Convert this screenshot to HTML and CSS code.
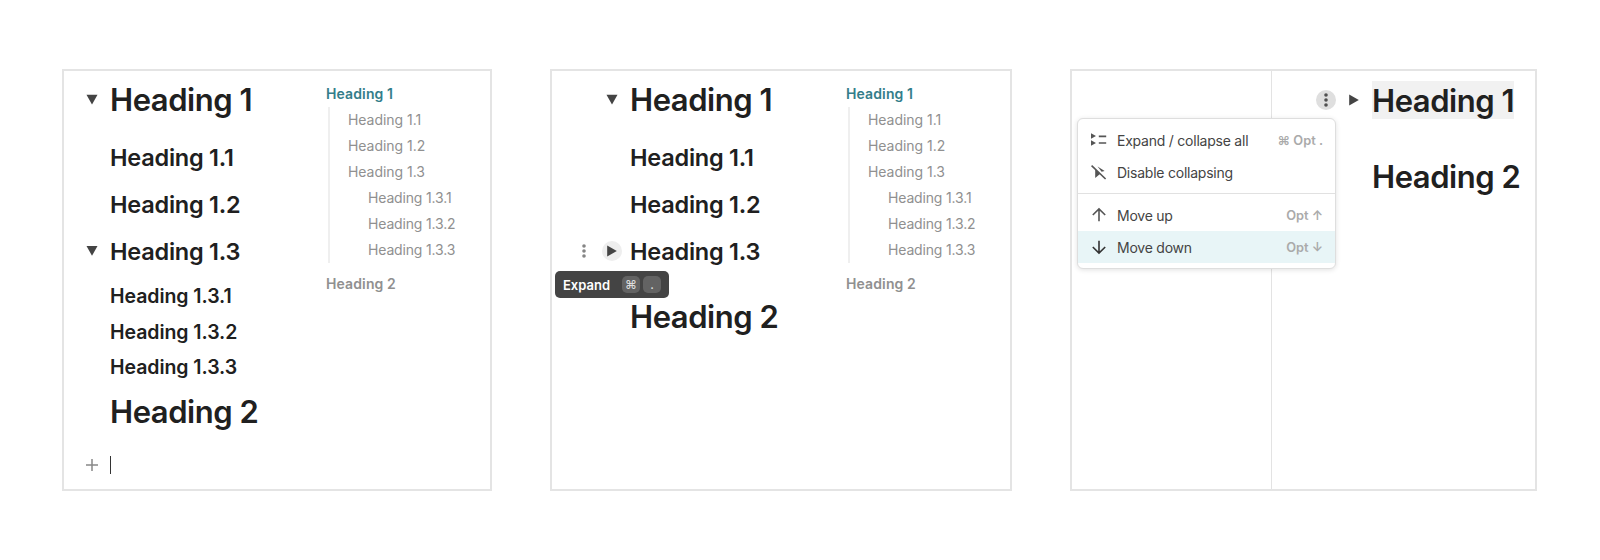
FILE: index.html
```html
<!DOCTYPE html>
<html lang="en">
<head>
<meta charset="utf-8">
<title>Collapsible headings</title>
<link rel="stylesheet" href="styles.css">
</head>
<body>
<main class="stage">
  <section class="panel panel-expanded">
    <div class="doc">
      <div class="row h1"><span class="gutter"><svg class="tri" viewBox="0 0 12 12"><path d="M.5.7h11L6 10.5z"/></svg></span><h1>Heading 1</h1></div>
      <div class="row h2 first"><span class="gutter"></span><h2>Heading 1.1</h2></div>
      <div class="row h2"><span class="gutter"></span><h2>Heading 1.2</h2></div>
      <div class="row h2"><span class="gutter"><svg class="tri" viewBox="0 0 12 12"><path d="M.5 0h11L6 9.8z"/></svg></span><h2>Heading 1.3</h2></div>
      <div class="row h3 first"><span class="gutter"></span><h3>Heading 1.3.1</h3></div>
      <div class="row h3"><span class="gutter"></span><h3>Heading 1.3.2</h3></div>
      <div class="row h3"><span class="gutter"></span><h3>Heading 1.3.3</h3></div>
      <div class="row h1 after-h3"><span class="gutter"></span><h1>Heading 2</h1></div>
      <div class="row entry"><span class="gutter"><svg class="plus" viewBox="0 0 12 12"><path d="M6 0v12M0 6h12"/></svg></span><span class="caret"></span></div>
    </div>
    <nav class="toc">
      <a class="top active">Heading 1</a>
      <div class="branch">
        <a>Heading 1.1</a><a>Heading 1.2</a><a>Heading 1.3</a>
        <a class="deep">Heading 1.3.1</a><a class="deep">Heading 1.3.2</a><a class="deep">Heading 1.3.3</a>
      </div>
      <a class="top">Heading 2</a>
    </nav>
  </section>

  <section class="panel panel-collapsed">
    <div class="doc">
      <div class="row h1"><span class="gutter"><svg class="tri" viewBox="0 0 12 12"><path d="M.5.7h11L6 10.5z"/></svg></span><h1>Heading 1</h1></div>
      <div class="row h2 first"><span class="gutter"></span><h2>Heading 1.1</h2></div>
      <div class="row h2"><span class="gutter"></span><h2>Heading 1.2</h2></div>
      <div class="row h2 target">
        <span class="gutter"><svg class="dots" viewBox="0 0 4 14"><circle cx="2" cy="2" r="1.8"/><circle cx="2" cy="7" r="1.8"/><circle cx="2" cy="12" r="1.8"/></svg><span class="round light"><svg class="tri" viewBox="0 0 12 12"><path d="M1.2.5v11L10.8 6z"/></svg></span></span>
        <h2>Heading 1.3</h2>
        <div class="tooltip">Expand<kbd class="cmd">⌘</kbd><kbd>.</kbd></div>
      </div>
      <div class="row h1 after-h2"><span class="gutter"></span><h1>Heading 2</h1></div>
    </div>
    <nav class="toc">
      <a class="top active">Heading 1</a>
      <div class="branch">
        <a>Heading 1.1</a><a>Heading 1.2</a><a>Heading 1.3</a>
        <a class="deep">Heading 1.3.1</a><a class="deep">Heading 1.3.2</a><a class="deep">Heading 1.3.3</a>
      </div>
      <a class="top">Heading 2</a>
    </nav>
  </section>

  <section class="panel panel-menu">
    <div class="side"></div>
    <div class="doc">
      <div class="row h1">
        <span class="gutter"><span class="round"><svg class="dots dark" viewBox="0 0 4 14"><circle cx="2" cy="2" r="1.8"/><circle cx="2" cy="7" r="1.8"/><circle cx="2" cy="12" r="1.8"/></svg></span><svg class="tri" viewBox="0 0 12 12"><path d="M1.2.5v11L10.8 6z"/></svg></span>
        <h1 class="selected">Heading 1</h1>
      </div>
      <div class="row h1 next"><span class="gutter"></span><h1>Heading 2</h1></div>
    </div>
    <div class="menu">
      <div class="item"><svg viewBox="0 0 18 16"><path class="fill" d="M1 1.2 6 4 1 6.8zM1 8.2 6 11 1 13.8z"/><path d="M8.8 4.4h7.4M8.8 11h7.4"/></svg><span>Expand / collapse all</span><small>⌘ Opt .</small></div>
      <div class="item"><svg viewBox="0 0 18 16"><path class="fill" d="M5.2 5.4v8.6L10 10.1zM7.6 2.6l7 4.3-3 .9z"/><path d="M1.6 1.6 15.6 15"/></svg><span>Disable collapsing</span></div>
      <hr>
      <div class="item"><svg viewBox="0 0 18 16"><path d="M9 14.3V2.2M2.8 8 9 1.9 15.2 8"/></svg><span>Move up</span><small>Opt ↑</small></div>
      <div class="item hover"><svg viewBox="0 0 18 16"><path d="M9 1.7v12.1M2.8 8 9 14.1 15.2 8"/></svg><span>Move down</span><small>Opt ↓</small></div>
    </div>
  </section>
</main>
</body>
</html>
```

FILE: styles.css
```css
* { box-sizing: border-box; }
body { margin: 0; background: #fff; color: #202020; font-family: Inter, "Liberation Sans", sans-serif; }
.stage { display: flex; gap: 58px; width: 1600px; height: 560px; padding: 69px 0 69px 62px; }
.panel { position: relative; display: flex; flex: none; height: 422px; border: 2px solid #e4e4e4; padding-top: 10px; }
.panel-expanded { width: 430px; }
.panel-collapsed { width: 462px; }
.panel-menu { width: 467px; padding-top: 0; }

.doc { flex: none; width: 262px; }
.panel-collapsed .doc { width: 294px; }
.row { position: relative; display: flex; align-items: center; }
.gutter { display: flex; flex: none; align-items: center; justify-content: flex-end; width: 46px; padding-right: 12px; }
.panel-collapsed .gutter { width: 78px; }
h1, h2, h3 { margin: 0; font-weight: 600; white-space: nowrap; }
h1 { padding-bottom: 1px; font-size: 31px; line-height: 37px; letter-spacing: -.47px; }
h2 { font-size: 23.5px; line-height: 47px; letter-spacing: -.23px; }
h3 { font-size: 19.5px; line-height: 35.5px; letter-spacing: -.06px; }
.h2.first { margin-top: 15px; }
.h3.first { margin-top: 4px; }
.after-h3 { margin-top: 7px; }
.after-h2 { margin-top: 23px; }
.entry { height: 20px; margin-top: 24px; }
.caret { width: 1px; height: 18px; background: #333; }

.tri { width: 12px; height: 12px; fill: #444; }
.plus { width: 12px; height: 12px; fill: none; stroke: #888; stroke-width: 1.5; }
.dots { width: 4px; height: 14px; fill: #858585; }
.dots.dark { fill: #505050; }
.round { display: flex; align-items: center; justify-content: center; width: 20px; height: 20px; border-radius: 50%; background: #dfdfdf; }
.round.light { background: #eee; }
.target .gutter { padding: 0 8px 1px 0; gap: 16px; }

.toc { display: flex; flex-direction: column; font-size: 14px; line-height: 26px; color: #909090; white-space: nowrap; }
.top { font-weight: 600; letter-spacing: .12px; }
.active { color: #337d8a; }
.branch { display: flex; flex-direction: column; margin: 0 0 8px 2px; padding-left: 18px; border-left: 2px solid #efefef; letter-spacing: -.04px; }
.deep { padding-left: 20px; letter-spacing: -.16px; }

.tooltip { position: absolute; left: 3px; top: 43px; display: flex; align-items: center; width: 114px; height: 27px; padding-left: 8px; border-radius: 5px; background: #444; color: #fff; font-size: 13px; line-height: 26px; font-weight: 600; }
kbd { display: flex; align-items: center; justify-content: center; width: 18px; height: 17px; margin-left: 3px; border-radius: 5px; background: #636363; color: #ddd; font: 500 12px Inter, "DejaVu Sans", sans-serif; }
.cmd { margin-left: 12px; }

.side { width: 200px; border-right: 1px solid #e3e3e3; }
.panel-menu .doc { padding-top: 10px; }
.panel-menu .gutter { width: 100px; gap: 12px; }
.panel-menu h1 { padding: 2px 0 0; line-height: 36px; }
.selected { background: #f1f1f1; }
.next { margin-top: 38px; }

.menu { position: absolute; left: 5px; top: 47px; width: 259px; height: 151px; padding-top: 5px; border: 1px solid #dedede; border-radius: 6px; background: #fff; box-shadow: 0 1px 5px rgba(0, 0, 0, .12); }
.item { display: flex; align-items: center; height: 32px; padding: 0 12px 0 12px; color: #444; font-size: 14px; letter-spacing: -.23px; }
.item svg { width: 18px; height: 16px; margin-right: 9px; fill: none; stroke: #555; stroke-width: 1.6; }
.item svg .fill { fill: #555; stroke: none; }
.item small { margin-left: auto; color: #aaa; font-size: 12.8px; font-weight: 600; letter-spacing: 0; }
.item.hover { background: #e8f5f7; }
.item.hover svg { stroke: #333; }
.menu hr { height: 1px; margin: 5px 0; border: 0; background: #e1e1e1; }
```
